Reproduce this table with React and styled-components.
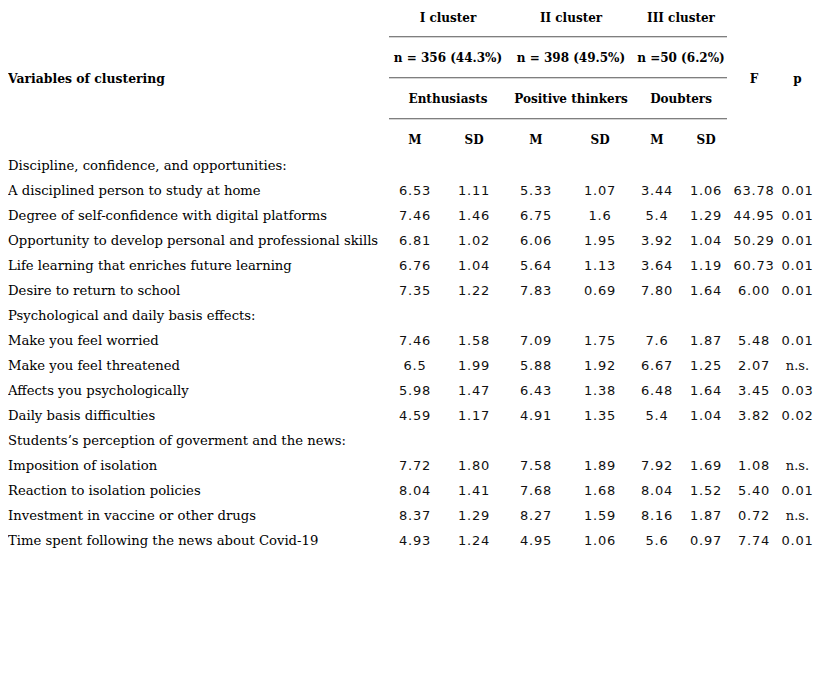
import styled, { createGlobalStyle } from 'styled-components';

const GlobalStyle = createGlobalStyle`
    body {
        margin: 8px;
        background: #ffffff;
        color: #000000;
        font-family: "DejaVu Serif", serif;
        font-size: 13px;
    }
`;

const clusters = [
    { name: 'I cluster', n: 'n = 356 (44.3%)', label: 'Enthusiasts' },
    { name: 'II cluster', n: 'n = 398 (49.5%)', label: 'Positive thinkers' },
    { name: 'III cluster', n: 'n =50 (6.2%)', label: 'Doubters' },
];

const widths = [381, 52, 66, 58, 70, 44, 48, 54, 33];

const sections = [
    {
        title: 'Discipline, confidence, and opportunities:',
        rows: [
            ['A disciplined person to study at home', '6.53', '1.11', '5.33', '1.07', '3.44', '1.06', '63.78', '0.01'],
            ['Degree of self-confidence with digital platforms', '7.46', '1.46', '6.75', '1.6', '5.4', '1.29', '44.95', '0.01'],
            ['Opportunity to develop personal and professional skills', '6.81', '1.02', '6.06', '1.95', '3.92', '1.04', '50.29', '0.01'],
            ['Life learning that enriches future learning', '6.76', '1.04', '5.64', '1.13', '3.64', '1.19', '60.73', '0.01'],
            ['Desire to return to school', '7.35', '1.22', '7.83', '0.69', '7.80', '1.64', '6.00', '0.01'],
        ],
    },
    {
        title: 'Psychological and daily basis effects:',
        rows: [
            ['Make you feel worried', '7.46', '1.58', '7.09', '1.75', '7.6', '1.87', '5.48', '0.01'],
            ['Make you feel threatened', '6.5', '1.99', '5.88', '1.92', '6.67', '1.25', '2.07', 'n.s.'],
            ['Affects you psychologically', '5.98', '1.47', '6.43', '1.38', '6.48', '1.64', '3.45', '0.03'],
            ['Daily basis difficulties', '4.59', '1.17', '4.91', '1.35', '5.4', '1.04', '3.82', '0.02'],
        ],
    },
    {
        title: 'Students\u2019s perception of goverment and the news:',
        rows: [
            ['Imposition of isolation', '7.72', '1.80', '7.58', '1.89', '7.92', '1.69', '1.08', 'n.s.'],
            ['Reaction to isolation policies', '8.04', '1.41', '7.68', '1.68', '8.04', '1.52', '5.40', '0.01'],
            ['Investment in vaccine or other drugs', '8.37', '1.29', '8.27', '1.59', '8.16', '1.87', '0.72', 'n.s.'],
            ['Time spent following the news about Covid-19', '4.93', '1.24', '4.95', '1.06', '5.6', '0.97', '7.74', '0.01'],
        ],
    },
];

const App = () => {
    return (
        <>
            <GlobalStyle />
            <StyledTable>
                <colgroup>
                    {widths.map((w, i) => <col key={i} style={{ width: w }} />)}
                </colgroup>
                <thead>
                    <tr>
                        <StyledCorner rowSpan={4}>Variables of clustering</StyledCorner>
                        {clusters.map((c) => (
                            <StyledGroupHead key={c.name} colSpan={2} $first>{c.name}</StyledGroupHead>
                        ))}
                        <StyledStatHead rowSpan={4}>F</StyledStatHead>
                        <StyledStatHead rowSpan={4}>p</StyledStatHead>
                    </tr>
                    <tr>
                        {clusters.map((c) => (
                            <StyledGroupHead key={c.n} colSpan={2}>{c.n}</StyledGroupHead>
                        ))}
                    </tr>
                    <tr>
                        {clusters.map((c) => (
                            <StyledGroupHead key={c.label} colSpan={2}>{c.label}</StyledGroupHead>
                        ))}
                    </tr>
                    <tr>
                        {clusters.map((c, ci) => [
                            <StyledSubHead key={c.name + 'm'}>M</StyledSubHead>,
                            <StyledSubHead key={c.name + 'sd'} $nudge={ci === 2}>SD</StyledSubHead>,
                        ])}
                    </tr>
                </thead>
                <tbody>
                    {sections.map((s) => [
                        <tr key={s.title}>
                            <StyledLabel colSpan={9}>{s.title}</StyledLabel>
                        </tr>,
                        ...s.rows.map((r) => (
                            <tr key={r[0]}>
                                <StyledLabel>{r[0]}</StyledLabel>
                                {r.slice(1).map((v, i) => (
                                    <StyledValue key={i} $ns={v === 'n.s.'} $nudge={i === 5}>{v}</StyledValue>
                                ))}
                            </tr>
                        )),
                    ])}
                </tbody>
            </StyledTable>
        </>
    );
};

const StyledTable = styled.table`
    width: 806px;
    table-layout: fixed;
    border-collapse: separate;
    border-spacing: 0;
    font-size: 13px;
`;

const StyledCorner = styled.th`
    text-align: left;
    vertical-align: middle;
    font-size: 12.4px;
    font-weight: bold;
    padding: 0 0 5px 0;
    white-space: nowrap;
`;

const StyledStatHead = styled.th`
    text-align: center;
    vertical-align: middle;
    font-size: 12px;
    font-weight: bold;
    padding: 0 0 3px 0;
`;

const StyledGroupHead = styled.th`
    text-align: center;
    font-size: 12px;
    font-weight: bold;
    white-space: nowrap;
    line-height: 20px;
    padding: ${(p) => (p.$first ? '0 0 9px' : '10px 0 10px')};
    border-bottom: 1px solid #d4d4d4;
    box-shadow: inset 0 -1px 0 #7f7f7f;
`;

const StyledSubHead = styled.th`
    text-align: center;
    font-size: 12px;
    font-weight: bold;
    line-height: 20px;
    padding: 10px 0 3px ${(p) => (p.$nudge ? '6px' : '0')};
`;

const StyledLabel = styled.td`
    text-align: left;
    line-height: 25px;
    padding: 0;
    white-space: nowrap;
    font-size: 13.2px;
`;

const StyledValue = styled.td`
    text-align: center;
    line-height: 25px;
    padding: 0 0 0 ${(p) => (p.$nudge ? '6px' : '0')};
    white-space: nowrap;
    color: #111111;
    font-family: ${(p) => (p.$ns ? '"DejaVu Serif", serif' : '"DejaVu Sans", sans-serif')};
    font-size: 13px;
    letter-spacing: ${(p) => (p.$ns ? '0' : '0.8px')};
`;

export default App;
